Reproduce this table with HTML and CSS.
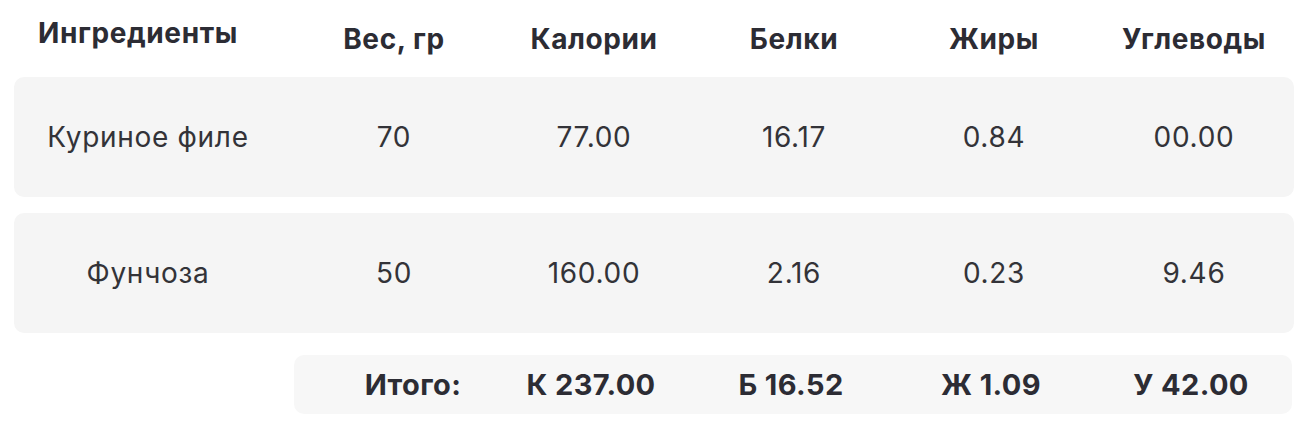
FILE: index.html
```html
<!DOCTYPE html>
<html lang="ru">
<head>
<meta charset="utf-8">
<title>Ингредиенты</title>
<link rel="stylesheet" href="styles.css">
</head>
<body>
<div class="table">
  <div class="head">
    <div class="hcell first">Ингредиенты</div>
    <div class="hcell">Вес, гр</div>
    <div class="hcell">Калории</div>
    <div class="hcell">Белки</div>
    <div class="hcell">Жиры</div>
    <div class="hcell">Углеводы</div>
  </div>
  <div class="row">
    <div class="cell first">Куриное филе</div>
    <div class="cell">70</div>
    <div class="cell">77.00</div>
    <div class="cell">16.17</div>
    <div class="cell">0.84</div>
    <div class="cell">00.00</div>
  </div>
  <div class="row">
    <div class="cell first">Фунчоза</div>
    <div class="cell">50</div>
    <div class="cell">160.00</div>
    <div class="cell">2.16</div>
    <div class="cell">0.23</div>
    <div class="cell">9.46</div>
  </div>
  <div class="total">
    <div class="tcell label">Итого:</div>
    <div class="tcell">К 237.00</div>
    <div class="tcell">Б 16.52</div>
    <div class="tcell">Ж 1.09</div>
    <div class="tcell">У 42.00</div>
  </div>
</div>
</body>
</html>
```
FILE: styles.css
```css
html, body {
  margin: 0;
  padding: 0;
  background: #ffffff;
}
body {
  font-family: Inter, "Noto Sans", sans-serif;
  color: #2c2c34;
}
.table {
  padding: 0 7px 0 14px;
  display: flex;
  flex-direction: column;
}
.head {
  display: grid;
  grid-template-columns: 280px repeat(5, 200px);
  height: 77px;
}
.hcell {
  font-size: 28px;
  font-weight: 700;
  letter-spacing: 0.6px;
  line-height: 1;
  text-align: center;
  padding-top: 25px;
}
.hcell.first {
  padding-top: 19px;
  padding-right: 32px;
}
.row {
  display: grid;
  grid-template-columns: 280px repeat(5, 200px);
  height: 120px;
  align-items: center;
  background: #f5f5f5;
  border-radius: 10px;
  margin-bottom: 16px;
}
.cell {
  font-size: 28px;
  font-weight: 400;
  letter-spacing: 0.7px;
  color: #333338;
  text-align: center;
}
.cell.first {
  padding-right: 12px;
}
.total {
  margin-left: 280px;
  margin-top: 6px;
  width: 998px;
  height: 59px;
  display: grid;
  grid-template-columns: repeat(5, 200px);
  align-items: center;
  background: #f7f7f7;
  border-radius: 10px;
}
.tcell {
  font-size: 29px;
  font-weight: 700;
  letter-spacing: 0.4px;
  text-align: center;
  color: #2c2c34;
  padding-right: 6px;
}
.tcell.label {
  padding-left: 38px;
  padding-right: 0;
}
```
